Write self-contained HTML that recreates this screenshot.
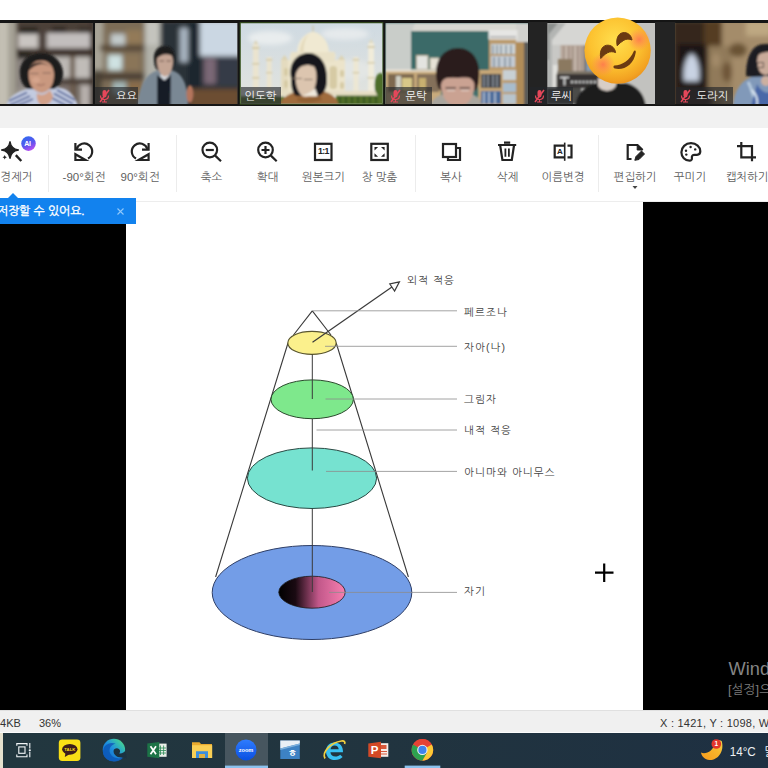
<!DOCTYPE html>
<html lang="ko">
<head>
<meta charset="utf-8">
<title>뷰어</title>
<style>
html,body{margin:0;padding:0;background:#fff;}
body{width:768px;height:768px;overflow:hidden;font-family:"Liberation Sans","NanumGothic","Noto Sans CJK KR",sans-serif;}
#root{position:relative;width:768px;height:768px;overflow:hidden;background:#fff;}
.abs{position:absolute;}
#band{left:0;top:20.200px;width:768px;height:85.600px;background:#151515;}
#grayband{left:0;top:106px;width:768px;height:22px;background:#f1f1f1;}
#toolbar{left:0;top:128px;width:768px;height:73px;background:#fff;border-bottom:1px solid #ededed;}
.sep{position:absolute;top:7px;width:1px;height:57px;background:#ececec;}
.lab{position:absolute;top:41px;text-align:center;font-size:11.5px;line-height:16px;color:#606060;white-space:nowrap;}
.nm{position:absolute;height:17px;background:rgba(34,38,42,.64);color:#f4f4f4;font-size:11.300px;line-height:18.600px;white-space:nowrap;overflow:hidden;}
#tip{left:0;top:198.400px;width:136px;height:25.300px;background:#1282ee;color:#fff;font-size:11.5px;line-height:25px;white-space:nowrap;}
#leftblack{left:0;top:223px;width:125.700px;height:487px;background:#000;}
#rightblack{left:642.800px;top:202.200px;width:126px;height:507.800px;background:#000;}
#status{left:0;top:710px;width:768px;height:23px;background:linear-gradient(#f0f0f0 0,#f0f0f0 20.500px,#fbfbfb 21px,#fbfbfb 23px);color:#333;font-size:11px;line-height:24px;border-top:1px solid #e0e0e0;box-sizing:border-box;}
#taskbar{left:3px;top:733px;width:765px;height:35px;background:linear-gradient(90deg,#22373f 0,#21343f 50%,#1e3042 100%);}
#tbleft{left:0;top:733px;width:3px;height:35px;background:#e6e2cf;}
</style>
</head>
<body>
<div id="root">
<div id="band" class="abs"></div>
<!--THUMBS_START-->
<svg class="abs" style="left:0;top:14px" width="768" height="92" viewBox="0 14 768 92">
<defs>
<filter id="b1" x="-10%" y="-10%" width="120%" height="120%"><feGaussianBlur stdDeviation="2"/></filter>
<filter id="b2" x="-10%" y="-10%" width="120%" height="120%"><feGaussianBlur stdDeviation="2.6"/></filter>
<filter id="b07" x="-10%" y="-10%" width="120%" height="120%"><feGaussianBlur stdDeviation="0.8"/></filter>
<filter id="b05" x="-10%" y="-10%" width="120%" height="120%"><feGaussianBlur stdDeviation="0.6"/></filter>
<clipPath id="c1"><rect x="0" y="23" width="92.7" height="81"/></clipPath>
<clipPath id="c2"><rect x="95" y="23" width="142.3" height="81"/></clipPath>
<clipPath id="c3"><rect x="240.8" y="23.3" width="141.6" height="80.2"/></clipPath>
<clipPath id="c4"><rect x="385.5" y="23" width="142.5" height="81"/></clipPath>
<clipPath id="c5"><rect x="547.5" y="23" width="107.5" height="81"/></clipPath>
<clipPath id="c6"><rect x="675.3" y="23" width="93" height="81"/></clipPath>
<linearGradient id="sky" x1="0" y1="0" x2="0" y2="1"><stop offset="0" stop-color="#cfdae2"/><stop offset="1" stop-color="#e3e4de"/></linearGradient>
<radialGradient id="emo" cx="0.46" cy="0.36" r="0.68"><stop offset="0" stop-color="#ffdf4e"/><stop offset="0.55" stop-color="#fcc230"/><stop offset="0.85" stop-color="#f3a322"/><stop offset="1" stop-color="#e88d1c"/></radialGradient>
<radialGradient id="blush"><stop offset="0" stop-color="#ff6f52" stop-opacity=".8"/><stop offset="0.5" stop-color="#ff8058" stop-opacity=".45"/><stop offset="1" stop-color="#ff8a5a" stop-opacity="0"/></radialGradient>
</defs>

<rect x="528.300" y="22" width="19.400" height="82.600" fill="#232323"/><rect x="655" y="22" width="20.500" height="82.600" fill="#232323"/>
<!-- thumb 1 -->
<g clip-path="url(#c1)">
<rect x="0" y="23" width="93" height="81" fill="#6e655d"/>
<g filter="url(#b1)">
<rect x="15" y="20" width="80" height="13" fill="#4b4139"/>
<rect x="20" y="27" width="18" height="8" fill="#2b2521"/><rect x="52" y="27" width="14" height="6" fill="#2e2723"/><rect x="78" y="27" width="14" height="6" fill="#3a302a"/>
<rect x="18" y="34" width="20" height="14" fill="#c9c5c1"/>
<rect x="47" y="33" width="44" height="15" fill="#c2bebd"/>
<rect x="39" y="30" width="7" height="20" fill="#4b413b"/>
<rect x="15" y="49" width="80" height="7" fill="#3c322c"/>
<rect x="18" y="52" width="13" height="7" fill="#2c2520"/>
<rect x="17" y="59" width="9" height="30" fill="#8b8581"/>
<rect x="52" y="57" width="18" height="21" fill="#bcb8b4"/>
<rect x="75" y="57" width="15" height="21" fill="#c0bcb8"/>
<rect x="70" y="56" width="5" height="50" fill="#6a5a4c"/>
<rect x="60" y="78" width="34" height="6" fill="#4a3e34"/>
<rect x="80" y="85" width="12" height="22" fill="#b5afab"/>
<rect x="60" y="85" width="10" height="22" fill="#7a706a"/>
<rect x="17" y="88" width="12" height="18" fill="#9a948e"/>
<rect x="90" y="20" width="5" height="90" fill="#40362f"/>
<rect x="-4" y="20" width="12" height="90" fill="#c3bfb3"/>
<rect x="8" y="20" width="8" height="90" fill="#a5a195"/>
</g>
<g filter="url(#b07)">
<path d="M6 106 C8 96 18 91 30 88 L56 87 C68 88 75 95 78 106 Z" fill="#c3cbe0"/>
<path d="M9 101 L27 92.500 M10 105 L30 96 M18 105.500 L33 99 M57 90 L75 100 M54 93.500 L73 104 M52 98 L66 105.500" stroke="#4d5f94" stroke-width="1.700" fill="none"/>
<path d="M20 74 C19 62 28 53 41 53 C53 53 61 60 63 71 C64 80 59 87 54 89 L28 89 C23 86 20 80 20 74Z" fill="#1d1b1b"/>
<path d="M28.500 74 C28.500 65 34 60.500 41.500 60.500 C49 60.500 54 66 54 75 C54 85 49 92 42 93 C34 92.500 28.500 85 28.500 74Z" fill="#c9987f"/>
<path d="M28 72 C30 62 42 58 54 70 C49 64 42 63 37 65 C33 66.500 30 69 28 72Z" fill="#1d1b1b"/>
<ellipse cx="36" cy="80" rx="4" ry="3" fill="#d5a48c"/>
<path d="M37 93 C40 96 46 95 50 90 L53 96 C52 102 48 105.500 42 105.500 C38 104 36 98 37 93Z" fill="#d2a189"/>
<path d="M30 73.500 h8.500 M42.500 73 h8.500" stroke="#86685a" stroke-width="1.100"/>
<path d="M37 84.500 q4 2 8 -.5" stroke="#9a6a5c" stroke-width="1" fill="none"/>
</g>
</g>

<!-- thumb 2 -->
<g clip-path="url(#c2)">
<rect x="95" y="23" width="143" height="81" fill="#6f675a"/>
<g filter="url(#b2)">
<rect x="92" y="20" width="56" height="90" fill="#7d6d56"/>
<rect x="92" y="20" width="11" height="50" fill="#a9a598"/>
<rect x="92" y="70" width="10" height="40" fill="#4c4438"/>
<rect x="111" y="34" width="14" height="11" fill="#c3cbcb"/>
<rect x="126" y="30" width="16" height="14" fill="#937a58"/>
<rect x="100" y="45" width="46" height="6" fill="#574735"/>
<rect x="108" y="55" width="14" height="15" fill="#cfe2e2"/>
<rect x="124" y="54" width="16" height="16" fill="#8a7558"/>
<rect x="98" y="73" width="48" height="7" fill="#483e33"/>
<rect x="113" y="82" width="13" height="12" fill="#a3b7b7"/>
<rect x="128" y="82" width="14" height="20" fill="#8a6c48"/>
<rect x="145" y="20" width="15" height="90" fill="#b1b1a9"/>
<rect x="145" y="20" width="15" height="25" fill="#c4c4be"/>
<rect x="160" y="20" width="82" height="90" fill="#293039"/>
<rect x="180" y="28" width="8" height="34" fill="#a9b5c1"/>
<rect x="188" y="20" width="12" height="72" fill="#1b252f"/>
<rect x="200" y="20" width="42" height="36" fill="#cbd7e3"/>
<rect x="204" y="58" width="12" height="26" fill="#7a6876"/>
<rect x="218" y="56" width="22" height="30" fill="#343a46"/>
<rect x="190" y="89" width="50" height="20" fill="#6c4d30"/>
</g>
<g filter="url(#b07)">
<path d="M137 106 C139 86 146 73 158 70.500 L172 70.500 C183 73 188 86 188 106 Z" fill="#7a8894"/>
<path d="M157 75 L164 80 L171 75 L170.500 106 L157 106 Z" fill="#171b28"/>
<path d="M160 76 L164.500 80.500 L169 76 L167 73 H162Z" fill="#d8dce0"/>
<path d="M154 60 C153 50 159 46 165 46 C171 46 175 50 174.500 59 C174 66 173 69 172 70 L157 70 C155 67 154 64 154 60Z" fill="#1b1b1d"/>
<path d="M157 61 C157 54 160 51.500 165 51.500 C170 51.500 173 55 173 62 C173 70 169.500 76 165 76.500 C160.500 76 157 69 157 61Z" fill="#c4a594"/>
<path d="M155 60 C156 50 170 47 174.500 58 C170 52.500 161 53 155 60Z" fill="#1b1b1d"/>
<ellipse cx="190" cy="94" rx="3.500" ry="9" fill="#b4745c"/>
<path d="M159.500 61 h4.500 M166.500 61 h4.500" stroke="#6a5248" stroke-width="1.200"/>
</g>
</g>

<!-- thumb 3 -->
<rect x="239.700" y="22.200" width="143.600" height="82.400" fill="#36521d"/>
<g clip-path="url(#c3)">
<rect x="240" y="23" width="143" height="81" fill="url(#sky)"/>
<g filter="url(#b2)"><ellipse cx="270" cy="38" rx="22" ry="7" fill="#e9edee"/><ellipse cx="345" cy="34" rx="24" ry="6" fill="#e6eaec"/><ellipse cx="352" cy="70" rx="20" ry="10" fill="#e3e6e4"/></g>
<g filter="url(#b07)">
<rect x="253" y="44" width="5.600" height="52" fill="#ebe4cf"/>
<rect x="252.200" y="47" width="7.200" height="2" fill="#d4caa8"/><rect x="252.200" y="63" width="7.200" height="1.600" fill="#d4caa8"/><rect x="252.200" y="77" width="7.200" height="1.600" fill="#d4caa8"/>
<path d="M253.600 44 l2.200 -4 l2.200 4z" fill="#dcd3b6"/>
<rect x="266.800" y="57" width="4.800" height="40" fill="#ebe4cf"/>
<rect x="266" y="59" width="6.400" height="1.600" fill="#d4caa8"/><rect x="266" y="72" width="6.400" height="1.400" fill="#d4caa8"/>
<rect x="353.400" y="57" width="5" height="38" fill="#ede7d3"/>
<rect x="352.600" y="59" width="6.600" height="1.600" fill="#d4caa8"/><rect x="352.600" y="72" width="6.600" height="1.400" fill="#d4caa8"/>
<rect x="368.200" y="43" width="5.800" height="52" fill="#f1ecda"/>
<rect x="367.400" y="46" width="7.400" height="2" fill="#d6cdae"/><rect x="367.400" y="62" width="7.400" height="1.600" fill="#d6cdae"/><rect x="367.400" y="77" width="7.400" height="1.600" fill="#d6cdae"/>
<path d="M368.800 43 l2.300 -4 l2.300 4z" fill="#e0d9be"/>
<path d="M297.500 56 C295.500 44 303 33.500 313 31.500 C323 33.500 330.500 44 328.500 56 Z" fill="#f0e9d2"/>
<path d="M300 56 C299 47 303 38 309 34 C304 40 303 48 304 56Z" fill="#e4dabb"/>
<path d="M313 31.500 v-6" stroke="#cdc3a4" stroke-width="1.200"/>
<ellipse cx="294.500" cy="57" rx="5" ry="4.600" fill="#ece5cd"/>
<ellipse cx="331" cy="56" rx="4.800" ry="4.400" fill="#f1ebd6"/>
<rect x="281" y="60" width="64" height="36" fill="#ece4cb"/>
<rect x="291" y="52" width="44" height="10" fill="#e9e1c7"/>
<rect x="281" y="60" width="7" height="36" fill="#e4dbbf"/>
<path d="M281 60 l3.500 -5 l3.500 5z M338 60 l3.500 -5 l3.500 5z" fill="#ddd3b2"/>
<rect x="329.500" y="66" width="7.500" height="23" rx="3.500" fill="#d6caa4"/>
<rect x="340" y="70" width="4" height="7" rx="2" fill="#d6caa4"/><rect x="340" y="82" width="4" height="7" rx="2" fill="#d6caa4"/>
<rect x="284" y="68" width="4" height="8" rx="2" fill="#d6caa4"/><rect x="284" y="80" width="4" height="8" rx="2" fill="#d6caa4"/>
<rect x="278" y="91" width="100" height="5" fill="#e6dec4"/>
<rect x="336" y="95.500" width="50" height="10" fill="#52702a"/>
<path d="M340 96 v8 M346 96 v8 M352 96 v8 M358 96 v8 M364 96 v8 M370 96 v8 M376 96 v8" stroke="#3a581c" stroke-width="2.400"/>
<ellipse cx="380.500" cy="85" rx="6" ry="12" fill="#4d6e2a"/>
<rect x="240" y="96.500" width="44" height="9" fill="#5f7636"/>
<path d="M279 106 C282 96 292 92 300 91.500 L322 91 C332 93 338 99 339 106 Z" fill="#a06c3c"/>
<path d="M291 78 C288 62 298 53 309 53 C322 54 327.500 66 327 80 C327 90 323 94 319 96 L296 96 C292 93 291 86 291 78Z" fill="#18171b"/>
<path d="M295.500 76 C296.500 66 306 62.500 314 66.500 C318 72 317 84 313 92 C310 97 304 98 301 95 C297 90 295.500 84 295.500 76Z" fill="#dcc5af"/>
<path d="M292.500 78.500 h9.500 M304 79.500 h8.500" stroke="#7f6e62" stroke-width="1.100"/>
<path d="M302 96 C306 94 312 92 315 88 L318 96.500Z" fill="#efe8dc"/>
<path d="M298 97 C304 99 312 99 320 95 L322 100 C314 103 304 103 297 101Z" fill="#8f5f33"/>
</g>
</g>

<!-- thumb 4 -->
<g clip-path="url(#c4)">
<rect x="385" y="23" width="144" height="81" fill="#3c6b69"/>
<g filter="url(#b07)">
<rect x="385" y="23" width="144" height="8" fill="#d9d9d2"/>
<path d="M385 23 h30 l-3 8 v40 h-27z" fill="#c9cdc9"/>
<rect x="411" y="31" width="78" height="40" fill="#3b6a68"/>
<rect x="489" y="30" width="40" height="76" fill="#b99a6c"/>
<rect x="516" y="23" width="14" height="19" fill="#d2d2ce"/>
<rect x="488.5" y="30" width="29" height="9.5" fill="#e6e6e4"/>
<rect x="490" y="36" width="26" height="2" fill="#b8b8b8"/>
<rect x="491" y="44" width="24" height="10" fill="#cfd6d8"/><rect x="491" y="56" width="24" height="11" fill="#c4ccd4"/>
<rect x="503" y="70" width="13" height="10" fill="#c8d0d4"/><rect x="503" y="83" width="13" height="9" fill="#a8bccc"/><rect x="503" y="94" width="13" height="10" fill="#b8c4cc"/>
<path d="M493 45 v9 M497 45 v9 M501 45 v9 M506 45 v9 M511 45 v9 M494 57 v10 M499 57 v10 M505 57 v10 M510 57 v10" stroke="#5c6c7c" stroke-width="1"/>
<rect x="516" y="42" width="8" height="64" fill="#b08c58"/>
<rect x="524" y="42" width="5" height="64" fill="#5a5a58"/>
<rect x="385" y="70" width="56" height="36" fill="#c9ab7c"/>
<rect x="385" y="69.5" width="56" height="2" fill="#ece6da"/>
<rect x="388" y="74" width="26" height="18" fill="#7d6850"/>
<rect x="417" y="74" width="22" height="18" fill="#84705a"/>
<rect x="396" y="76" width="5" height="15" fill="#d0d0c4"/><rect x="402" y="78" width="10" height="13" fill="#d8c888"/>
<rect x="419" y="78" width="7" height="13" fill="#c8b070"/>
<rect x="416.5" y="55.5" width="11.5" height="14" fill="#e4e4e0" stroke="#b0a890" stroke-width="1"/>
<rect x="430" y="58" width="9" height="11.5" fill="#e6e2d6" stroke="#b8b098" stroke-width=".8"/>
<rect x="478" y="70" width="25" height="36" fill="#c8a878"/>
<rect x="481" y="74" width="20" height="14" fill="#3c4046"/><rect x="481" y="91" width="20" height="13" fill="#4a6a9a"/>
<path d="M484 75 v12 M488 75 v12 M493 75 v12 M497 75 v12" stroke="#a8b0b8" stroke-width="1.2"/>
<path d="M484 92 v12 M489 92 v12 M495 92 v12" stroke="#c8d0dc" stroke-width="1.4"/>
<path d="M430 106 C432 99 438 95 445 94 L470 94 C477 95 481 99 482 106Z" fill="#a9a59d"/>
<path d="M436.500 80 C433.500 60 444 48 458 48 C472 48 481.500 60 479 80 C478.500 86 477 89 475 91 L441 91 C438.500 89 437 85 436.500 80Z" fill="#2c1c1e"/>
<path d="M441 86 C441 79 447 76 458 76.500 C469 76 474.500 79 474.500 86 C474.500 97 468 106 458 107 C448 106 441 97 441 86Z" fill="#caa292"/>
<path d="M438 82 C440 74 448 72 458 73 C468 72 476 75 478 82 C474 77.500 468 77 458 78 C448 77 442 78 438 82Z" fill="#2c1c1e"/>
<path d="M445.500 88 h10.500 M459.500 88 h10.500" stroke="#54423f" stroke-width="1.500"/>
<path d="M447 90.500 h8 M461 90.500 h8" stroke="#e4d4cc" stroke-width="1.200"/>
</g>
</g>

<!-- thumb 5 -->
<g clip-path="url(#c5)">
<rect x="547" y="23" width="109" height="81" fill="#c8c8c5"/>
<g filter="url(#b07)">
<rect x="551" y="23" width="70" height="22" fill="#d6d6d3"/>
<path d="M547 23 H566 L552 40 V104 H547Z" fill="#b3b5b3"/>
<path d="M547 23 H558 L549 34 V60 H547Z" fill="#8c908e"/>
<rect x="560.500" y="45" width="24" height="27" fill="#b9a99d"/>
<path d="M564 46 v25 M568.500 46 v25 M573 46 v25 M577.500 46 v25 M582 46 v25" stroke="#a08f82" stroke-width="1.500"/>
<path d="M566.200 46 v25 M575.200 46 v25" stroke="#d0c4ba" stroke-width="1.200"/>
<rect x="584.500" y="45" width="1.500" height="28" fill="#4a4a4c"/>
<rect x="586" y="60" width="7" height="12" fill="#8c9cae"/>
<rect x="558" y="59" width="14" height="12" fill="#8b7961"/>
<rect x="553" y="65" width="4.200" height="22" fill="#e2e2de"/>
<rect x="557" y="71" width="44" height="4" fill="#7d7468"/>
<rect x="556.500" y="74" width="46" height="14" fill="#343231"/>
<path d="M560 77.500 h9 M564.500 77.500 v8" stroke="#e4e4e4" stroke-width="1.600"/>
<path d="M571 82 h26" stroke="#cfcfcf" stroke-width="2.600" stroke-dasharray="2.200 1.600"/>
<rect x="547" y="88" width="34" height="16" fill="#4b4b49"/>
<rect x="620" y="23" width="36" height="81" fill="#c2c2bf"/>
<path d="M575 106 C577 93 585 86 597 83.500 L626 83 C638 86 644 94 646 106Z" fill="#1b1b1d"/>
<path d="M598 78 h18 v8 c-4 6.500 -14 6.500 -18 0z" fill="#d8cec6"/>
</g>
</g>

<!-- thumb 6 -->
<g clip-path="url(#c6)">
<rect x="675" y="23" width="93" height="81" fill="#86704f"/>
<g filter="url(#b2)">
<rect x="672" y="20" width="36" height="90" fill="#35251a"/>
<rect x="704" y="20" width="20" height="28" fill="#553c24"/>
<rect x="722" y="20" width="50" height="90" fill="#a48c6a"/>
<rect x="708" y="46" width="24" height="50" fill="#917a5a"/>
<ellipse cx="738" cy="50" rx="9" ry="7" fill="#6b5234"/>
<ellipse cx="727" cy="72" rx="5" ry="10" fill="#6e5538"/>
<ellipse cx="716" cy="60" rx="4" ry="7" fill="#a48c6a"/>
<rect x="746" y="20" width="26" height="16" fill="#bea882"/>
<rect x="678" y="44" width="28" height="44" fill="#1a1513"/>
<path d="M684 81 C682.500 67 686.500 56 691.500 53.500 C697 56 700.500 67 699 81Z" fill="#c9d3e3"/>
<rect x="672" y="90" width="40" height="16" fill="#30241c"/>
</g>
<g filter="url(#b07)">
<path d="M746 76 C746 56 752 45 764 44 L770 44 V80 Z" fill="#1e1c20"/>
<ellipse cx="766" cy="62" rx="9" ry="13" fill="#c9ab9a"/>
<path d="M756 56 C757 48 764 46 770 47 V52 C764 52 759 53 756 58Z" fill="#1e1c20"/>
<path d="M757.500 62.500 h6 v5 h-6z" fill="none" stroke="#4a4040" stroke-width="1"/>
<path d="M733 106 C734 90 742 80 752 77 L770 76 V106Z" fill="#8199b9"/>
<path d="M748 82 C752 88 752 96 758 104" stroke="#b4c8dc" stroke-width="3" fill="none"/>
<ellipse cx="766" cy="81" rx="5" ry="5" fill="#cdb0a0"/>
<path d="M757 84 C761 92 768 94 770 92 V106 H751 Z" fill="#4a68a8"/>
<path d="M752 90 C756 94 758 100 757 106" stroke="#d8e4f0" stroke-width="2" fill="none"/>
</g>
</g>

<!-- emoji -->
<circle cx="617.600" cy="50.600" r="33.200" fill="url(#emo)"/>
<circle cx="603" cy="64.500" r="12" fill="url(#blush)"/>
<circle cx="639" cy="39.500" r="11.500" fill="url(#blush)"/>
<path d="M600.800 58.500 C599 50 603 44.800 608.200 45.200 C612.400 45.500 615 48.600 615.600 52.600 C613 51.400 610 51.400 607.500 52.800 C604.800 54.200 603 56.200 600.800 58.500Z" fill="#6b3a12" stroke="#6b3a12" stroke-width="1" stroke-linejoin="round"/>
<path d="M617.200 45.800 C615.400 37.400 619.400 32.200 624.600 32.600 C628.800 32.900 631.400 36 632 40 C629.400 38.800 626.400 38.800 623.900 40.200 C621.200 41.600 619.400 43.600 617.200 45.800Z" fill="#6b3a12" stroke="#6b3a12" stroke-width="1" stroke-linejoin="round"/>
<path d="M614.400 65.600 C622 65.200 630 60.500 633.800 51.200 C634.500 50 636 50.600 635.800 52.200 C634 64.500 624 70.800 614.800 68.600 C613.200 68.200 613 65.800 614.400 65.600Z" fill="#6b3a12"/>
</svg>
<!-- name labels -->
<div class="nm" style="left:95px;top:87px;width:43px"><svg class="abs" style="left:3px;top:2px" width="13" height="14" viewBox="0 0 13 14"><rect x="4.5" y="1" width="4" height="7.5" rx="2" fill="#e4475a"/><path d="M2.5 6.5c0 5.4 8 5.4 8 0M6.500 10.500v2.500M4 13h5" stroke="#e4475a" stroke-width="1.200" fill="none"/><path d="M2 13L11 1" stroke="#e4475a" stroke-width="1.500"/></svg><span class="abs" style="left:21px;top:0">요요</span></div>
<div class="nm" style="left:240.600px;top:87px;width:40.600px;height:16.600px"><span class="abs" style="left:4px;top:0">인도학</span></div>
<div class="nm" style="left:385.500px;top:87px;width:46px"><svg class="abs" style="left:3px;top:2px" width="13" height="14" viewBox="0 0 13 14"><rect x="4.5" y="1" width="4" height="7.5" rx="2" fill="#e4475a"/><path d="M2.5 6.5c0 5.4 8 5.400 8 0M6.500 10.500v2.500M4 13h5" stroke="#e4475a" stroke-width="1.200" fill="none"/><path d="M2 13L11 1" stroke="#e4475a" stroke-width="1.500"/></svg><span class="abs" style="left:20px;top:0">문탁</span></div>
<div class="nm" style="left:530px;top:87px;width:43px"><svg class="abs" style="left:3px;top:2px" width="13" height="14" viewBox="0 0 13 14"><rect x="4.5" y="1" width="4" height="7.5" rx="2" fill="#e4475a"/><path d="M2.5 6.5c0 5.4 8 5.400 8 0M6.500 10.500v2.500M4 13h5" stroke="#e4475a" stroke-width="1.200" fill="none"/><path d="M2 13L11 1" stroke="#e4475a" stroke-width="1.500"/></svg><span class="abs" style="left:21px;top:0">루씨</span></div>
<div class="nm" style="left:675.500px;top:87px;width:57px"><svg class="abs" style="left:3px;top:2px" width="13" height="14" viewBox="0 0 13 14"><rect x="4.5" y="1" width="4" height="7.5" rx="2" fill="#e4475a"/><path d="M2.5 6.5c0 5.400 8 5.400 8 0M6.500 10.500v2.500M4 13h5" stroke="#e4475a" stroke-width="1.200" fill="none"/><path d="M2 13L11 1" stroke="#e4475a" stroke-width="1.500"/></svg><span class="abs" style="left:21px;top:0">도라지</span></div>
<!--THUMBS_END-->
<div id="grayband" class="abs"></div>
<div id="toolbar" class="abs">
<!--TOOLBAR_START-->
<div class="sep" style="left:47.5px"></div><div class="sep" style="left:175.5px"></div><div class="sep" style="left:415px"></div><div class="sep" style="left:598px"></div>
<svg class="abs" style="left:0;top:0" width="768" height="73" viewBox="0 128 768 73" fill="none" stroke="#232323" stroke-width="2.200">
<defs><linearGradient id="aig" x1="0.2" y1="0" x2="0.7" y2="1"><stop offset="0" stop-color="#2f6cf0"/><stop offset="0.55" stop-color="#5a55ee"/><stop offset="1" stop-color="#c24cf0"/></linearGradient></defs>
<!-- sparkle -->
<path d="M10 141.700 Q11.100 148.900 18.400 150 Q11.100 151.100 10 158.300 Q8.900 151.100 1.600 150 Q8.900 148.900 10 141.700Z" fill="#232323" stroke-width="1.300" stroke-linejoin="round"/>
<path d="M4.700 155 L5.400 156.500 L6.900 157.200 L5.400 157.900 L4.700 159.400 L4 157.900 L2.500 157.200 L4 156.500Z" fill="#232323" stroke="none"/>
<path d="M15.800 155.200 L21.300 161" stroke-width="2.400" stroke-linecap="butt"/>
<circle cx="28.500" cy="143.600" r="7.300" fill="url(#aig)" stroke="none"/>
<!-- rotate left (center 84) -->
<path d="M76.600 149 A8 8 0 1 1 88 158.500"/>
<path d="M75.400 143 V149.600 H82"/>
<path d="M75.400 154.200 V160 H85.400 Z" stroke-linejoin="miter"/>
<!-- rotate right (center 140) -->
<path d="M147.400 149 A8 8 0 1 0 136 158.500"/>
<path d="M148.600 143 V149.600 H142"/>
<path d="M148.600 154.200 V160 H138.600 Z"/>
<!-- zoom out -->
<circle cx="209.800" cy="150" r="7.300"/><path d="M215.200 155.600 L221 161.200" stroke-width="2.200"/><path d="M205.800 150 H213.800"/>
<!-- zoom in -->
<circle cx="265.500" cy="150" r="7.300"/><path d="M270.900 155.600 L276.700 161.200" stroke-width="2.200"/><path d="M261.500 150 H269.500 M265.500 146 V154"/>
<!-- 1:1 -->
<rect x="315" y="143.800" width="16.500" height="16.200"/>
<!-- fit -->
<rect x="371.300" y="143.800" width="16.500" height="16.200"/>
<path d="M374.500 147 h3.600 l-3.600 3.600z M384.600 147 h-3.600 l3.600 3.600z M374.500 156.800 h3.600 l-3.600 -3.600z M384.600 156.800 h-3.600 l3.600 -3.600z" fill="#232323" stroke="none"/>
<!-- copy -->
<rect x="443" y="144" width="13" height="13"/>
<path d="M457 148 H460 V160 H448 V157.500"/>
<!-- trash -->
<path d="M498 145 H516.200 M504 142.600 H510.200" />
<path d="M500.200 145.500 L502.400 160 H511.800 L514 145.500"/>
<path d="M505.400 148.600 V156.800 M508.900 148.600 V156.800" stroke-width="1.800"/>
<!-- rename -->
<path d="M564.700 145.700 H554.700 V157.400 H564.700"/>
<path d="M564.700 142.600 V160.800" stroke-width="1.600"/>
<path d="M567.500 145.700 H571.500 V157.400 H567.500"/>
<!-- edit -->
<path d="M631.500 159 H627.700 V145 H637.500 L642.600 150"/>
<path d="M637.200 144.500 V150 H642.500 Z" fill="#232323" stroke-width="1"/>
<path d="M634.800 160.300 L636 156.500 L641.500 151 L644.500 154 L639 159.500 Z" fill="#232323" stroke-width="1"/>
<!-- dropdown -->
<path d="M632.500 186 h5 l-2.500 3z" fill="#444" stroke="none"/>
<!-- palette -->
<path d="M691 143.200 C685.500 143.200 681.400 147.300 681.400 152.200 C681.400 157 685 160.700 689.500 160.700 C691.300 160.700 692.200 159.500 691.900 158 C691.500 156 692.600 154.800 694.600 154.800 H697 C699.200 154.800 700.300 153.300 700.300 151.300 C700.300 146.800 696.300 143.200 691 143.200Z"/>
<g fill="#232323" stroke="none"><circle cx="686" cy="150.800" r="1.200"/><circle cx="690.600" cy="147" r="1.200"/><circle cx="695.200" cy="149.400" r="1.200"/><circle cx="686.300" cy="154.600" r="1.200"/></g>
<!-- crop -->
<path d="M741.300 142 V157.300 H756 M737 146.200 H752 V161.200"/>
</svg>
<span class="abs" style="left:24.200px;top:11.600px;font-size:7px;font-weight:bold;color:#fff;line-height:8px;letter-spacing:-.2px">AI</span>
<span class="abs" style="left:316.300px;top:19.200px;width:14px;text-align:center;font-size:8.800px;font-weight:bold;color:#232323;line-height:9px;letter-spacing:-.7px">1:1</span>
<span class="abs" style="left:556px;top:19.200px;width:8px;text-align:center;font-size:8px;font-weight:bold;color:#232323;line-height:9px">A</span>
<div class="lab" style="left:-29px;width:80px">배경제거</div>
<div class="lab" style="left:44px;width:80px">-90°회전</div>
<div class="lab" style="left:100px;width:80px">90°회전</div>
<div class="lab" style="left:171.500px;width:80px">축소</div>
<div class="lab" style="left:227.500px;width:80px">확대</div>
<div class="lab" style="left:283.500px;width:80px">원본크기</div>
<div class="lab" style="left:339.500px;width:80px">창 맞춤</div>
<div class="lab" style="left:411px;width:80px">복사</div>
<div class="lab" style="left:467.500px;width:80px">삭제</div>
<div class="lab" style="left:523px;width:80px">이름변경</div>
<div class="lab" style="left:595px;width:80px">편집하기</div>
<div class="lab" style="left:650px;width:80px">꾸미기</div>
<div class="lab" style="left:707px;width:80px">캡처하기</div>
<!--TOOLBAR_END-->
</div>
<div id="leftblack" class="abs"></div>
<div id="rightblack" class="abs"></div>
<!--TIP_START-->
<div id="tip" class="abs"><span class="abs" style="right:51.500px;top:.4px;font-size:11.800px;-webkit-text-stroke:.35px #fff">원본에 덮어쓰지 않고 저장할 수 있어요.</span><svg class="abs" style="left:116px;top:8.400px" width="9" height="9" viewBox="0 0 9 9"><path d="M1.500 1.500L7.500 7.500M7.500 1.500L1.500 7.500" stroke="#8fc8fb" stroke-width="1.100"/></svg></div>
<div class="abs" style="left:7.500px;top:193px;width:0;height:0;border-left:5px solid transparent;border-right:5px solid transparent;border-bottom:5.500px solid #1282ee"></div>
<!--TIP_END-->
<!--DIAGRAM_START-->
<svg class="abs" style="left:126px;top:202px" width="517" height="508" viewBox="126 202 517 508">
<defs><linearGradient id="selfg" x1="0" y1="0" x2="1" y2="0"><stop offset="0" stop-color="#000"/><stop offset="0.250" stop-color="#1a0a12"/><stop offset="0.600" stop-color="#c2588a"/><stop offset="1" stop-color="#f77fb0"/></linearGradient></defs>
<g stroke="#3a3a3a" stroke-width="1" fill="none">
<path d="M312.300 310.800 L293.500 335 M312.300 310.800 L331 335" stroke-width="1.100"/>
<path d="M288 343 L215.600 577 M336.200 343 L408.400 577" stroke-width="1.100"/>
<ellipse cx="312" cy="592.500" rx="99.800" ry="47" fill="#739de7" stroke="#2e3e66"/>
<ellipse cx="312" cy="592.200" rx="33.200" ry="16" fill="url(#selfg)" stroke="#1a1a1a" stroke-width=".800"/>
<ellipse cx="312" cy="478.200" rx="64.600" ry="30.300" fill="#76e2d0" stroke="#2a4a44"/>
<ellipse cx="312.200" cy="399.300" rx="41.200" ry="19.400" fill="#7ee88c" stroke="#2a4a2c"/>
<ellipse cx="312" cy="342.900" rx="24.200" ry="11.500" fill="#fbf08c" stroke="#5a5630" stroke-width="1.200"/>
<path d="M312.300 354.600 V399 M312.300 418.800 V470.500 M312.300 508.600 V592"/>
<path d="M312.500 342.300 L393 286.300" stroke-width="1.200"/>
<path d="M399.400 281.800 L389.800 284 L394.600 291 Z" fill="#fff" stroke-width="1.200"/>
</g>
<g stroke="#8c8c8c" stroke-width=".800" fill="none">
<path d="M312.500 310.800 H457 M325 346.300 H457 M325.500 399 H457 M316.500 430 H457 M326 471.400 H457 M329 592.400 H457"/>
</g>
<g font-family="'Liberation Sans','NanumGothic','Noto Sans CJK KR',sans-serif" font-size="10.500" letter-spacing="1.100" fill="#444">
<text x="407" y="283.800">외적 적응</text>
<text x="464" y="316.300">페르조나</text>
<text x="464" y="350.800">자아(나)</text>
<text x="464" y="402.600">그림자</text>
<text x="464" y="434.200">내적 적응</text>
<text x="464" y="475.800">아니마와 아니무스</text>
<text x="464" y="595.200">자기</text>
</g>
<path d="M595 572.700 H613.500 M604.200 563.500 V582" stroke="#000" stroke-width="2.200"/>
</svg>
<div class="abs" style="left:728.600px;top:657.300px;color:#858585;font-size:18.200px;line-height:24px;white-space:nowrap">Windows 정품 인증</div>
<div class="abs" style="left:728px;top:681px;color:#7c7c7c;font-size:12.800px;line-height:18px;white-space:nowrap">[설정]으로 이동하여 Windows를 정품 인증합니다.</div>
<!--DIAGRAM_END-->
<div id="status" class="abs"><span class="abs" style="left:-6px;top:0">24KB</span><span class="abs" style="left:39px;top:0">36%</span><span class="abs" style="left:660px;top:0;white-space:nowrap;letter-spacing:.25px">X : 1421, Y : 1098, W : 1920</span></div>
<div id="tbleft" class="abs"></div>
<div id="taskbar" class="abs">
<!--TASKBAR_START-->
<svg class="abs" style="left:-3px;top:0" width="768" height="35" viewBox="0 733 768 35">
<defs>
<linearGradient id="edg" x1="0" y1="1" x2="1" y2="0"><stop offset="0" stop-color="#0c59b8"/><stop offset="0.5" stop-color="#1f8fe0"/><stop offset="0.78" stop-color="#38c4a8"/><stop offset="1" stop-color="#6ddc6c"/></linearGradient>
<linearGradient id="zmg" x1="0" y1="0" x2="0" y2="1"><stop offset="0" stop-color="#2f7cff"/><stop offset="1" stop-color="#0b4fe0"/></linearGradient>
<linearGradient id="moon" x1="0" y1="1" x2="1" y2="0"><stop offset="0" stop-color="#f79a1c"/><stop offset="0.6" stop-color="#f8b62c"/><stop offset="1" stop-color="#f1d24a"/></linearGradient>
<filter id="tb05" x="-10%" y="-10%" width="120%" height="120%"><feGaussianBlur stdDeviation="0.350"/></filter>
</defs>
<rect x="225" y="733" width="43" height="35" fill="#47565f"/>
<rect x="225" y="765.600" width="43" height="2.400" fill="#8cc2ee"/>
<rect x="404.700" y="765.600" width="35.600" height="2.400" fill="#8cc2ee"/>
<g filter="url(#tb05)">
<!-- task view -->
<g stroke="#f2f6f8" stroke-width="1.100" fill="none">
<path d="M16.800 745.800 V743.600 H27 V745.800"/>
<rect x="18.800" y="746.900" width="6.200" height="6.400"/>
<path d="M16.800 754.400 V756.700 H27 V754.400"/>
<path d="M29.800 743 V748.600 M29.800 752 V757.200"/>
</g>
<circle cx="29.800" cy="750.300" r="1.100" fill="#f2f6f8"/>
<!-- kakao -->
<rect x="58.800" y="739.400" width="21.600" height="21.600" rx="3.400" fill="#f9de19"/>
<ellipse cx="69.800" cy="749.300" rx="7.700" ry="5.400" fill="#3b1e1e"/>
<path d="M65.500 752.500 L64.800 757 L69.500 754.300Z" fill="#3b1e1e"/>
<!-- edge -->
<circle cx="113.900" cy="750" r="11.200" fill="url(#edg)"/>
<path d="M103 752.500 C103 745 109 741.500 115.500 743.500 C110.500 745 108.300 749.500 110.300 753.800 C112.500 758.300 119 759.800 124.200 756.200 C121 762 111.500 763.200 106.500 759 C104.300 757.200 103 754.800 103 752.500Z" fill="#0f58b8" opacity=".85"/>
<path d="M113.600 750.600 C114 748.200 117.300 747.400 119.200 749.200 C120.500 750.500 120.200 752.400 119.200 753.400 C121.800 753.800 124.400 752.600 125.300 750.600 L127 758.500 L122 757.500 C117 758 113 754.500 113.600 750.600Z" fill="#1f3240"/>
<!-- excel -->
<rect x="158" y="743.600" width="8.600" height="13.200" fill="#e9efe9"/>
<path d="M160.500 745.500 V755 M163.600 745.500 V755 M159 748 H166 M159 750.500 H166 M159 753 H166" stroke="#2c8a56" stroke-width=".8"/>
<path d="M147.300 743.600 L159.300 742 V758.300 L147.300 756.800Z" fill="#1f7346"/>
<path d="M150.500 746.200 L156 754.200 M156 746.200 L150.500 754.200" stroke="#fff" stroke-width="1.700"/>
<!-- explorer -->
<path d="M192 742.200 H199.500 L201 744 H212 V758 H192Z" fill="#e9aa2e"/>
<rect x="192" y="745.200" width="20.200" height="12.800" fill="#f9cf55"/>
<path d="M196 758 V751.200 H208 V758 H205 V754 H199 V758Z" fill="#3b8ede"/>
<rect x="199" y="754" width="6" height="4" fill="#e0b040"/>
<!-- zoom -->
<circle cx="246" cy="749.900" r="10.500" fill="url(#zmg)"/>
<!-- hangul -->
<rect x="280.300" y="740.500" width="19.500" height="18.500" fill="#3c82c4"/>
<path d="M280.300 740.500 H299.800 V743.500 L280.300 748.500Z" fill="#e9f0f6"/>
<path d="M280.300 748.500 L299.800 743.500 V745 L280.300 750Z" fill="#7db0dc"/>
<!-- IE -->
<path d="M326 751.200 C326 745.600 330 742.400 334.600 742.400 C339.600 742.400 343.300 746 343 752.300 H330.400 C330.800 755.300 332.700 756.600 335.400 756.600 C337.400 756.600 339 755.800 340.200 754.700 L342.600 757 C340.700 759 338.200 760 335 760 C329.600 760 326 756.500 326 751.200Z M330.500 749.300 H338.700 C338.500 747 337 745.600 334.700 745.600 C332.400 745.600 330.900 747 330.500 749.300Z" fill="#37c0f2" fill-rule="evenodd"/>
<path d="M325 758.500 C321.500 752 331 742.500 341.500 741 C344.500 740.600 345.400 742 344.600 744" stroke="#f2cf3e" stroke-width="1.700" fill="none"/>
<!-- ppt -->
<rect x="379" y="743.200" width="9.300" height="13.600" fill="#f6ece8"/>
<rect x="381" y="745" width="5.500" height="4" fill="#d8593a"/><path d="M381 751.500 H387 M381 754 H387" stroke="#d8593a" stroke-width="1"/>
<path d="M368.300 743.400 L381 741.700 V758.300 L368.300 756.700Z" fill="#d34a27"/>
<!-- chrome -->
<circle cx="422.400" cy="749.900" r="10.800" fill="#e54335"/>
<path d="M422.400 749.900 L413.050 744.500 A10.800 10.800 0 0 0 422.400 760.700 L427.100 752.600 Z" fill="#2fa24f"/>
<path d="M422.400 749.900 L431.750 744.500 A10.800 10.800 0 0 1 422.400 760.700 L427.100 752.600 Z" fill="#fcc934"/>
<path d="M413.050 744.500 A10.800 10.800 0 0 1 431.750 744.500 L422.400 744.500Z" fill="#e54335"/>
<circle cx="422.400" cy="749.900" r="5.200" fill="#f4f4f4"/>
<circle cx="422.400" cy="749.900" r="4.100" fill="#3f83ec"/>
<!-- weather -->
<path d="M701 752.600 C705.500 754.500 713.500 752 715.500 741 C717.500 739.800 720.500 740 721.800 741.200 C724.600 752 717.500 760.400 709.500 760 C704.800 759.700 701.600 756.400 701 752.600Z" fill="url(#moon)"/>
<circle cx="716.300" cy="744" r="4.800" fill="#e3342c"/>
</g>
<g font-family="'Liberation Sans','NanumGothic',sans-serif">
<text x="69.800" y="750.900" font-size="4.200" font-weight="bold" fill="#f9de19" text-anchor="middle">TALK</text>
<text x="246" y="751.600" font-size="5.600" font-weight="bold" fill="#fff" text-anchor="middle">zoom</text>
<text x="292.500" y="757" font-size="11" font-weight="bold" fill="#fff" text-anchor="middle">ㅎ</text>
<text x="374.600" y="754.400" font-size="11.500" font-weight="bold" fill="#fff" text-anchor="middle">P</text>
<text x="716.300" y="746.300" font-size="6.500" font-weight="bold" fill="#fff" text-anchor="middle">1</text>
<text x="729.700" y="756" font-size="12.800" textLength="26" lengthAdjust="spacingAndGlyphs" fill="#eef1f4">14°C</text>
<text x="764.600" y="756" font-size="12.500" fill="#eef1f4">맑음</text>
</g>
</svg>
<!--TASKBAR_END-->
</div>
</div>
</body>
</html>
